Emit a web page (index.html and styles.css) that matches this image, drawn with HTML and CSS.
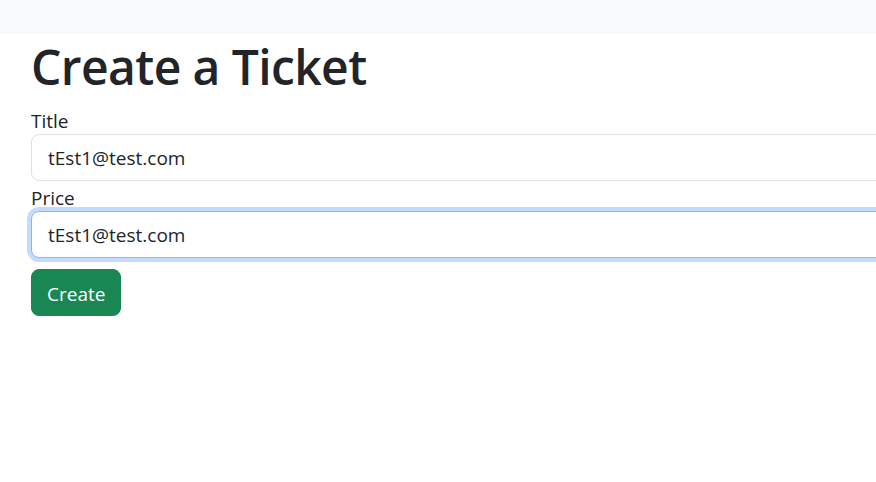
FILE: index.html
```html
<!DOCTYPE html>
<html lang="en">
<head>
<meta charset="utf-8">
<title>Create a Ticket</title>
<link rel="stylesheet" href="styles.css">
</head>
<body>
<nav class="navbar"></nav>
<main class="container">
  <h1 class="page-title">Create a Ticket</h1>
  <form class="ticket-form">
    <div class="field">
      <label class="field-label" for="title">Title</label>
      <input class="field-input" id="title" type="text" value="tEst1@test.com">
    </div>
    <div class="field">
      <label class="field-label" for="price">Price</label>
      <input class="field-input is-focused" id="price" type="text" value="tEst1@test.com">
    </div>
    <button class="btn-create" type="button">Create</button>
  </form>
</main>
</body>
</html>
```

FILE: styles.css
```css
html, body {
  margin: 0;
  padding: 0;
  overflow: hidden;
  background: #ffffff;
}

body {
  font-family: "Open Sans", "Noto Sans", sans-serif;
  color: #212529;
  width: 876px;
  height: 482px;
}

.navbar {
  height: 34px;
  background: #f8f9fa;
}

.container {
  padding-left: 31px;
}

.page-title {
  margin: 5px 0 13px;
  font-size: 48px;
  line-height: 56px;
  font-weight: 560;
  letter-spacing: -0.6px;
}

.ticket-form {
  width: 1100px;
  display: flex;
  flex-direction: column;
  align-items: flex-start;
}

.field {
  width: 100%;
  margin-bottom: 4px;
}

.field-label {
  display: block;
  font-size: 19px;
  line-height: 26px;
}

.field-input {
  box-sizing: border-box;
  display: block;
  width: 100%;
  height: 47px;
  padding: 0 16px;
  font-family: inherit;
  font-size: 19px;
  color: #212529;
  background: #fff;
  border: 1px solid #dee2e6;
  border-radius: 8px;
  outline: none;
}

.field-input.is-focused {
  border-color: #86b7fe;
  box-shadow: 0 0 0 4px rgba(13, 110, 253, 0.25);
}

.btn-create {
  margin-top: 7px;
  box-sizing: border-box;
  height: 47px;
  width: 90px;
  padding: 2px 16px 0 15px;
  font-family: inherit;
  font-size: 19px;
  line-height: 45px;
  color: #fff;
  background: #198754;
  border: 1px solid #198754;
  border-radius: 8px;
}
```
